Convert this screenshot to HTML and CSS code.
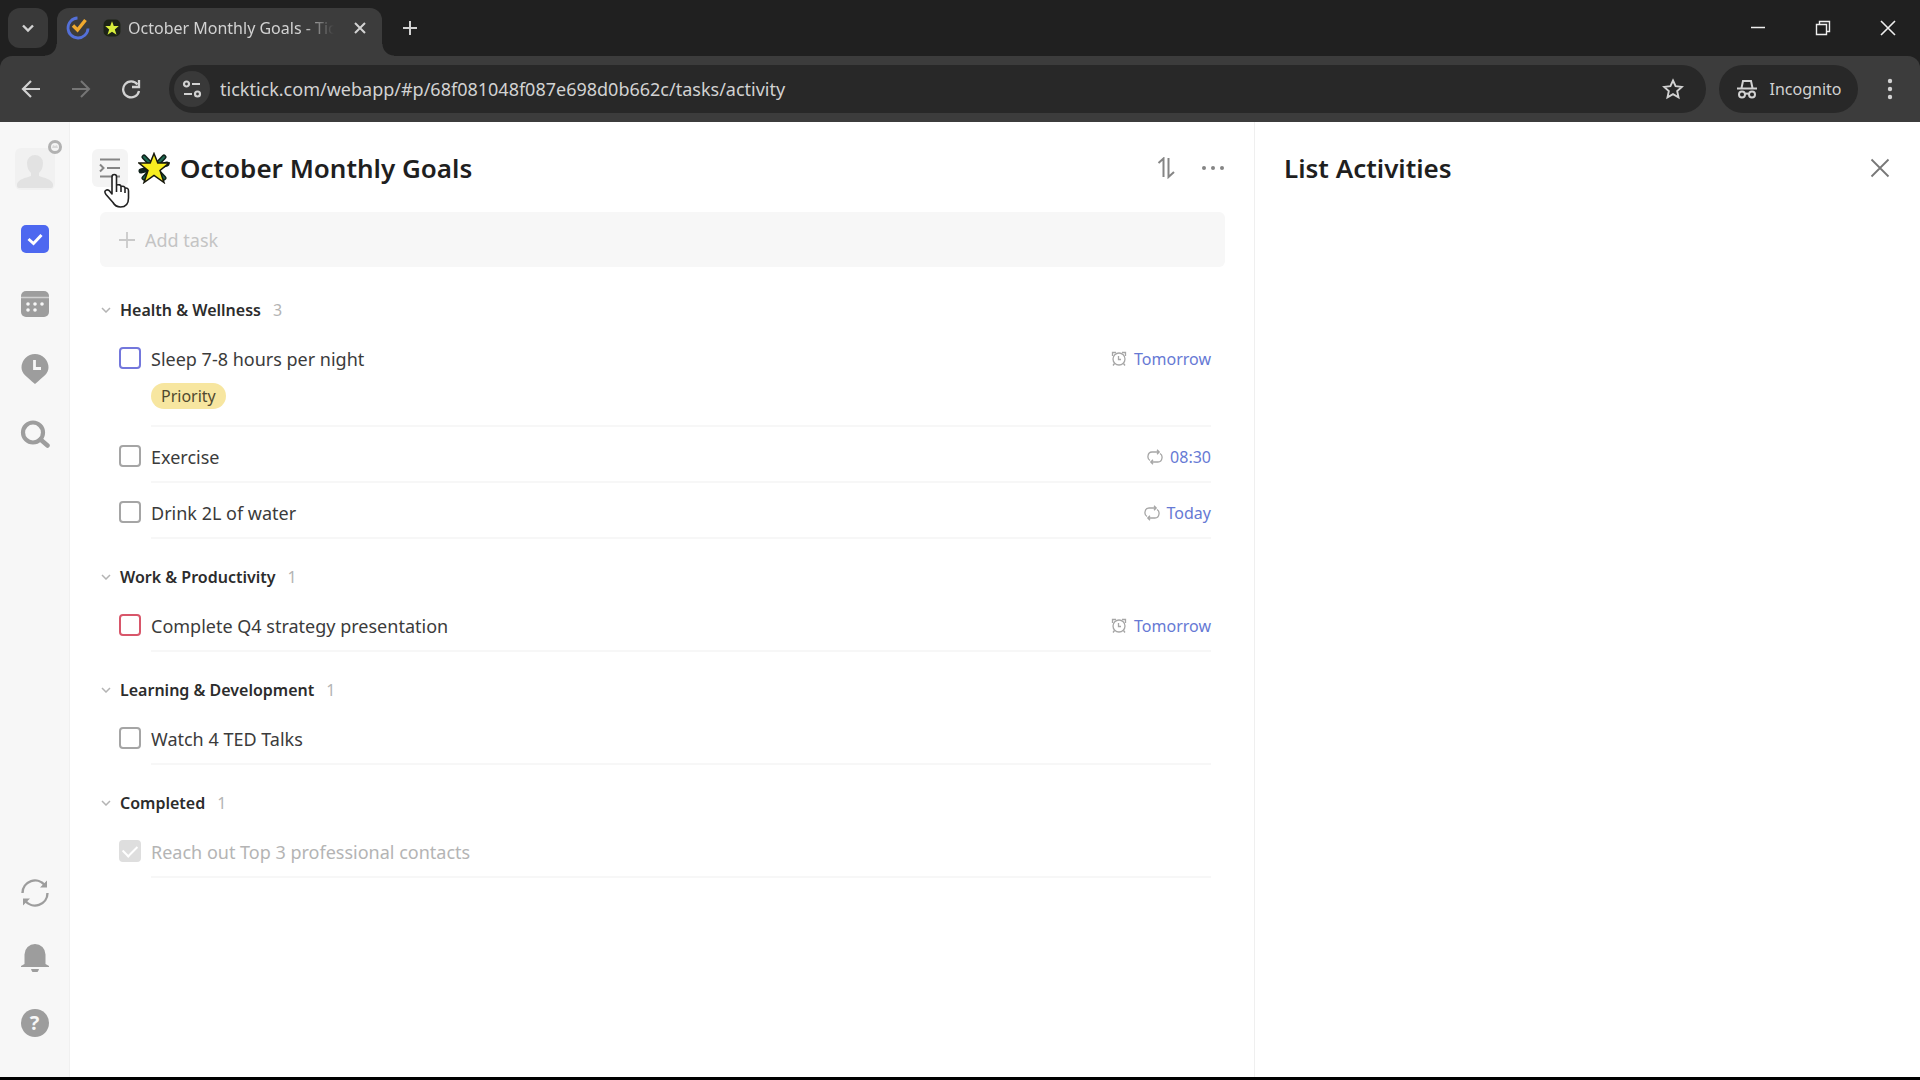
FILE: index.html
```html
<!DOCTYPE html>
<html lang="en">
<head>
<meta charset="utf-8">
<title>October Monthly Goals - TickTick</title>
<link rel="stylesheet" href="styles.css">
</head>
<body>
<header class="browser">
  <div class="tabstrip">
    <button class="tab-search" aria-label="Search tabs"><svg width="14" height="14" viewBox="0 0 14 14"><path d="M2 4.500l5 5 5-5" fill="none" stroke="currentColor" stroke-width="2.400"/></svg></button>
    <div class="tab">
      <svg width="24" height="24" viewBox="0 0 24 24" fill="none"><path d="M11.500 2A10 10 0 1 0 22 12.500" stroke="#5470d8" stroke-width="2.800"/><path d="M7 9.500l4.500 4.500L19.500 4" stroke="#f0a92e" stroke-width="3.400"/></svg>
      <svg class="tab-star" width="18" height="18" viewBox="0 0 32 32"><rect x="1" y="1" width="30" height="30" rx="9" fill="#1d2317"/><path d="M16 4l3.200 8.500H28l-7 6 3 9.500-8-5.500L8 28l3-9.500-7-6h8.800z" fill="#d8ef3c"/></svg>
      <span class="tab-title">October Monthly Goals - TickTick</span>
      <button class="tab-close" aria-label="Close tab"><svg width="14" height="14" viewBox="0 0 14 14"><path d="M2 2l10 10M12 2L2 12" stroke="currentColor" stroke-width="2"/></svg></button>
    </div>
    <button class="new-tab" aria-label="New tab"><svg width="16" height="16" viewBox="0 0 16 16"><path d="M8 1v14M1 8h14" stroke="currentColor" stroke-width="2"/></svg></button>
    <div class="window-buttons">
      <button aria-label="Minimize"><svg width="16" height="16" viewBox="0 0 16 16"><path d="M1 7.500h14" stroke="currentColor" stroke-width="1.500"/></svg></button>
      <button aria-label="Restore"><svg width="16" height="16" viewBox="0 0 16 16" fill="none" stroke="currentColor" stroke-width="1.400"><path d="M1.500 4.500h10v10h-10zM4.500 4.500v-3h10v10h-3"/></svg></button>
      <button aria-label="Close"><svg width="16" height="16" viewBox="0 0 16 16"><path d="M1 1l14 14M15 1L1 15" stroke="currentColor" stroke-width="1.600"/></svg></button>
    </div>
  </div>
  <div class="toolbar">
    <button aria-label="Back"><svg width="20" height="20" viewBox="0 0 20 20" fill="none" stroke="currentColor" stroke-width="2.200"><path d="M19 10H3M10 2L2 10l8 8"/></svg></button>
    <button class="dim" aria-label="Forward"><svg width="20" height="20" viewBox="0 0 20 20" fill="none" stroke="currentColor" stroke-width="2"><path d="M1 10h16M10 2l8 8-8 8"/></svg></button>
    <button aria-label="Reload"><svg width="20" height="20" viewBox="0 0 20 20" fill="none" stroke="currentColor" stroke-width="2.300"><path d="M16.500 5.500A8 8 0 1 0 18 12"/><path d="M18 1v7h-7"/></svg></button>
    <div class="address">
      <button class="site-info" aria-label="Site information"><svg width="20" height="18" viewBox="0 0 20 18" fill="none" stroke="currentColor" stroke-width="2.200"><circle cx="4.500" cy="4" r="2.500"/><path d="M10 4h8M2 14h8"/><circle cx="15.500" cy="14" r="2.500"/></svg></button>
      <input class="url" aria-label="Address" value="ticktick.com/webapp/#p/68f081048f087e698d0b662c/tasks/activity">
      <button aria-label="Bookmark"><svg width="22" height="22" viewBox="0 0 22 22" fill="none" stroke="currentColor" stroke-width="1.900"><path d="M11 2.500l2.600 5.700 6.200.7-4.600 4.200 1.300 6.200-5.500-3.200-5.500 3.200 1.300-6.200-4.600-4.200 6.200-.7z"/></svg></button>
    </div>
    <button class="incognito"><svg width="22" height="20" viewBox="0 0 22 20" fill="none" stroke="currentColor" stroke-width="2"><path d="M5.500 9L7 2h8l1.500 7M1 9.500h20"/><circle cx="6" cy="15.500" r="3"/><circle cx="16" cy="15.500" r="3"/><path d="M9 15q2-1 4 0"/></svg>Incognito</button>
    <button class="menu" aria-label="Browser menu"><svg width="6" height="22" viewBox="0 0 6 22" fill="currentColor"><circle cx="3" cy="3" r="2.200"/><circle cx="3" cy="11" r="2.200"/><circle cx="3" cy="19" r="2.200"/></svg></button>
  </div>
</header>

<div class="app">
  <nav class="rail" aria-label="Main">
    <button class="avatar" aria-label="Account">
      <svg width="40" height="42" viewBox="0 0 40 42" fill="#e2e2e2"><rect width="40" height="42" rx="6" fill="#f1f1f1"/><path d="M12 15a8 8 0 0 1 16 0c0 5-2 8-4 10v3c6 2 12 3 14 8v2q0 2-2 2H4q-2 0-2-2v-2c2-5 8-6 14-8v-3c-2-2-4-5-4-10z"/></svg>
      <svg class="badge" width="16" height="16" viewBox="0 0 16 16"><circle cx="8" cy="8" r="5.500" fill="#f4f4f4" stroke="#b2b2b2" stroke-width="3"/><path d="M5 9l1-3 2 1 2-1 1 3z" fill="#d8d8d8"/></svg>
    </button>
    <a class="rail-item" href="#tasks" aria-label="Tasks"><svg width="28" height="28" viewBox="0 0 28 28"><rect width="28" height="28" rx="5" fill="#4d68f0"/><path d="M7.500 14l5 4.500 8-8.500" fill="none" stroke="#fff" stroke-width="3"/></svg></a>
    <a class="rail-item" href="#calendar" aria-label="Calendar"><svg width="28" height="28" viewBox="0 0 28 28"><rect y="1" width="28" height="26" rx="5" fill="#9d9d9d"/><path d="M0 7.500h28" stroke="#d0d0d0" stroke-width="1.500"/><g fill="#f7f7f7"><circle cx="7" cy="14" r="1.800"/><circle cx="14" cy="14" r="1.800"/><circle cx="21" cy="14" r="1.800"/><circle cx="7" cy="20" r="1.800"/><circle cx="14" cy="20" r="1.800"/></g></svg></a>
    <a class="rail-item" href="#focus" aria-label="Focus"><svg width="28" height="30" viewBox="0 0 28 30"><path d="M14 0a13.500 13.500 0 0 1 13.500 13.500c0 6-5 9-13.500 16.500C5.500 22.500.5 19.500.5 13.500A13.500 13.500 0 0 1 14 0z" fill="#9d9d9d"/><path d="M13.500 6v8.500H20" fill="none" stroke="#f7f7f7" stroke-width="2.800"/></svg></a>
    <a class="rail-item" href="#search" aria-label="Search"><svg width="30" height="28" viewBox="0 0 30 28" fill="none" stroke="#9d9d9d"><circle cx="13" cy="12.500" r="10" stroke-width="4.200"/><path d="M20.500 19.500l7 6" stroke-width="4.500" stroke-linecap="round"/></svg></a>
    <div class="rail-space"></div>
    <button class="rail-item" aria-label="Sync"><svg width="28" height="28" viewBox="0 0 28 28" fill="none" stroke="#9d9d9d" stroke-width="2.400"><path d="M1.500 14A12.500 12.500 0 0 1 24 6.500M26.500 14A12.500 12.500 0 0 1 4 21.500"/><path d="M26 1.500V8.500H19zM2 26.500V19.500H9z" fill="#9d9d9d" stroke="none"/></svg></button>
    <button class="rail-item" aria-label="Notifications"><svg width="28" height="28" viewBox="0 0 28 28" fill="#9d9d9d"><path d="M3.500 20V10.500a10.500 10.500 0 0 1 21 0V20l3.500 2v1H0v-1zM10 25h8q-1 4-4 4t-4-4z"/></svg></button>
    <button class="rail-item" aria-label="Help"><span class="help">?</span></button>
  </nav>

  <main class="list">
    <div class="list-head">
      <button class="toggle" aria-label="Toggle sidebar"><svg width="22" height="20" viewBox="0 0 22 20" fill="none" stroke="#858585" stroke-width="2"><path d="M1 1.500h20M8 10h13M1 18.500h20M1 6.500L4.500 10 1 13.500"/></svg></button>
      <svg class="star" width="32" height="32" viewBox="0 0 32 32"><g stroke="#10231c" stroke-width="5" stroke-linecap="round"><path d="M6 5l20 21M26 5L6 26M3 19l26-7"/></g><g stroke="#1f6b52" stroke-width="2" stroke-linecap="round"><path d="M6 5l20 21M26 5L6 26"/></g><path d="M16 1.500l3.800 9.500H31l-9 7.500 4 12L16 23.500 6 30.500l4-12-9-7.500h11.200z" fill="#f7ee20" stroke="#17180c" stroke-width="1.500"/></svg>
      <h1>October Monthly Goals</h1>
      <button class="sort" aria-label="Sort"><svg width="18" height="22" viewBox="0 0 18 22" fill="none" stroke="#858585" stroke-width="2"><path d="M1.500 6L6.500 1.500V20M11.500 1v19L17 15"/></svg></button>
      <button aria-label="More"><svg width="24" height="6" viewBox="0 0 24 6" fill="#858585"><circle cx="3" cy="3" r="2"/><circle cx="12" cy="3" r="2"/><circle cx="21" cy="3" r="2"/></svg></button>
    </div>
    <div class="add">
      <svg width="16" height="16" viewBox="0 0 16 16"><path d="M8 0v16M0 8h16" stroke="#c9c9c9" stroke-width="1.800"/></svg>
      <input aria-label="Add task" placeholder="Add task">
    </div>

    <section>
      <h2><svg class="chev" viewBox="0 0 10 6"><path d="M1 1l4 4 4-4"/></svg>Health &amp; Wellness <span>3</span></h2>
      <div class="task tall">
        <input class="blue" type="checkbox" id="t1">
        <div class="body"><label for="t1">Sleep 7-8 hours per night</label>
          <span class="due"><svg width="16" height="16" viewBox="0 0 16 16"><circle cx="8" cy="8" r="6"/><path d="M1.500 5V1.500H5M11 1.500h3.500V5M3.500 12.500L2 14.500M12.500 12.500l1.500 2M7.500 5v3.500H10"/></svg>Tomorrow</span>
          <span class="tag">Priority</span></div>
      </div>
      <div class="task">
        <input type="checkbox" id="t2">
        <div class="body"><label for="t2">Exercise</label>
          <span class="due"><svg width="16" height="16" viewBox="0 0 16 16"><path d="M3 11.500Q.5 10 1 7q.5-4 4-4h7M10 .8L12.200 3 10 5.200M13 4.500q2.500 1.500 2 4.500-.5 4-4 4H4M6 10.800L3.800 13 6 15.200"/></svg>08:30</span></div>
      </div>
      <div class="task">
        <input type="checkbox" id="t3">
        <div class="body"><label for="t3">Drink 2L of water</label>
          <span class="due"><svg width="16" height="16" viewBox="0 0 16 16"><path d="M3 11.500Q.5 10 1 7q.5-4 4-4h7M10 .8L12.200 3 10 5.200M13 4.500q2.500 1.500 2 4.500-.5 4-4 4H4M6 10.800L3.800 13 6 15.200"/></svg>Today</span></div>
      </div>
    </section>
    <section>
      <h2><svg class="chev" viewBox="0 0 10 6"><path d="M1 1l4 4 4-4"/></svg>Work &amp; Productivity <span>1</span></h2>
      <div class="task">
        <input class="red" type="checkbox" id="t4">
        <div class="body"><label for="t4">Complete Q4 strategy presentation</label>
          <span class="due"><svg width="16" height="16" viewBox="0 0 16 16"><circle cx="8" cy="8" r="6"/><path d="M1.500 5V1.500H5M11 1.500h3.500V5M3.500 12.500L2 14.500M12.500 12.500l1.500 2M7.500 5v3.500H10"/></svg>Tomorrow</span></div>
      </div>
    </section>
    <section>
      <h2><svg class="chev" viewBox="0 0 10 6"><path d="M1 1l4 4 4-4"/></svg>Learning &amp; Development <span>1</span></h2>
      <div class="task">
        <input type="checkbox" id="t5">
        <div class="body"><label for="t5">Watch 4 TED Talks</label></div>
      </div>
    </section>
    <section>
      <h2><svg class="chev" viewBox="0 0 10 6"><path d="M1 1l4 4 4-4"/></svg>Completed <span>1</span></h2>
      <div class="task done">
        <input type="checkbox" id="t6" checked>
        <div class="body"><label for="t6">Reach out Top 3 professional contacts</label></div>
      </div>
    </section>
  </main>

  <aside class="panel">
    <h1>List Activities</h1>
    <button aria-label="Close panel"><svg width="20" height="20" viewBox="0 0 20 20"><path d="M1.500 1.500l17 17M18.500 1.500l-17 17" stroke="#777" stroke-width="1.800"/></svg></button>
  </aside>
</div>
<svg class="cursor" width="28" height="36" viewBox="0 0 28 36"><path d="M9 21V4q0-2.500 2.300-2.500T13.500 4v8q4-1 4.500 1.500 3.500-.8 4 1.500 3.500-.5 3.500 3v7q0 9-8 9-5 0-7.500-4.500L3 21.500q-2.500-3.500.5-4.500Q5.500 16.500 7 18.500zM13.500 12v7M18 13.500V19M22 15v5" fill="#fff" stroke="#222" stroke-width="1.600" stroke-linejoin="round"/></svg>
</body>
</html>
```
FILE: styles.css
```css
* { box-sizing: border-box; }
body {
  margin: 0;
  min-height: 100vh;
  display: flex;
  flex-direction: column;
  background: #fff;
  border-bottom: 3px solid #000;
  color: #1f1f1f;
  font-family: "Noto Sans", "Open Sans", sans-serif;
  font-size: 18px;
}
button, input { font: inherit; color: inherit; }
button {
  display: flex;
  align-items: center;
  justify-content: center;
  padding: 0;
  border: 0;
  background: none;
}
svg { display: block; flex: none; }
h1, h2 { margin: 0; }
h1 { font-size: 26px; font-weight: 600; line-height: 36px; }

/* Browser frame */
.browser { background: #202020; color: #d2d2d2; }
.tabstrip { display: flex; height: 56px; padding-left: 8px; }
.tab-search {
  width: 40px;
  height: 40px;
  margin-top: 8px;
  border-radius: 12px;
  background: #393939;
}
.tab {
  position: relative;
  display: flex;
  align-items: center;
  width: 325px;
  height: 48px;
  margin: 8px 0 0 9px;
  padding: 0 12px 8px 9px;
  border-radius: 12px 12px 0 0;
  background: #3c3c3c;
}
.tab::before, .tab::after {
  content: "";
  position: absolute;
  bottom: 0;
  width: 12px;
  height: 12px;
}
.tab::before { right: 100%; background: radial-gradient(circle at 0 0, transparent 11px, #3c3c3c 12px); }
.tab::after { left: 100%; background: radial-gradient(circle at 100% 0, transparent 11px, #3c3c3c 12px); }
.tab-star { margin: 0 7px 0 13px; }
.tab-title {
  flex: 1;
  min-width: 0;
  overflow: hidden;
  white-space: nowrap;
  font-size: 16px;
  line-height: 24px;
  mask-image: linear-gradient(to right, #000 85%, transparent);
}
.tab-close { width: 20px; height: 20px; margin-left: 16px; }
.new-tab { width: 32px; margin-left: 12px; }
.window-buttons { display: flex; margin-left: auto; }
.window-buttons button { width: 65px; color: #eee; }
.toolbar {
  display: flex;
  align-items: center;
  height: 66px;
  padding: 0 14px 0 6px;
  border-radius: 12px 12px 0 0;
  background: #3c3c3c;
}
.toolbar > button { width: 50px; height: 46px; }
.toolbar > .dim { color: #767676; }
.address {
  display: flex;
  flex: 1;
  align-items: center;
  height: 48px;
  margin-left: 13px;
  padding: 0 22px 0 5px;
  border-radius: 24px;
  background: #282828;
}
.site-info { width: 36px; height: 36px; border-radius: 50%; background: #393939; }
.url {
  flex: 1;
  min-width: 0;
  margin-left: 10px;
  padding: 0;
  border: 0;
  background: none;
}
.toolbar > .incognito {
  gap: 12px;
  width: 139px;
  height: 48px;
  margin: 0 16px 0 13px;
  border-radius: 24px;
  background: #282828;
  font-size: 16px;
}
.toolbar > .menu { width: 32px; }

/* Navigation rail */
.app { display: grid; flex: 1; grid-template-columns: 70px 16fr 9fr; }
.rail {
  display: flex;
  flex-direction: column;
  padding: 26px 0 22px;
  border-right: 1px solid #f0f0f0;
  background: #f7f7f7;
}
.avatar { position: relative; width: 69px; height: 42px; margin-bottom: 16px; }
.badge { position: absolute; top: -9px; right: 6px; }
.rail-item { display: flex; align-items: center; justify-content: center; width: 69px; height: 65px; }
.rail-space { flex: 1; }
.help {
  width: 28px;
  height: 28px;
  border-radius: 50%;
  background: #9d9d9d;
  color: #f7f7f7;
  font-size: 20px;
  font-weight: 700;
  line-height: 28px;
}

/* Task list */
.list { min-width: 0; padding: 22px 29px 0 30px; }
.list-head { display: flex; align-items: center; height: 48px; margin-bottom: 20px; }
.toggle { width: 36px; height: 38px; margin: 0 10px 0 -8px; border-radius: 6px; background: #f4f4f4; }
.star { margin-right: 10px; }
.sort { margin: 0 26px 0 auto; }
.add {
  display: flex;
  align-items: center;
  gap: 10px;
  height: 55px;
  margin-bottom: 5px;
  padding: 0 19px;
  border-radius: 6px;
  background: #f7f7f7;
}
.add input { flex: 1; padding: 0; border: 0; background: none; }
.add input::placeholder { color: #c4c4c4; opacity: 1; }
h2 {
  display: flex;
  align-items: center;
  height: 57px;
  padding-top: 18px;
  font-size: 16px;
  font-weight: 600;
  color: #2c2c2c;
}
h2 span { margin-left: 12px; font-weight: 400; color: #b4b4b4; }
.chev { width: 10px; height: 6px; margin: 0 9px 0 1px; fill: none; stroke: #b4b4b4; stroke-width: 1.5; }
.task { display: flex; gap: 10px; padding: 0 14px 0 19px; }
.task input {
  flex: none;
  appearance: none;
  width: 22px;
  height: 22px;
  margin: 18px 0 0;
  border: 2px solid #a5a5a5;
  border-radius: 4px;
  background: #fff;
}
.task .blue { border-color: #7377dc; }
.task .red { border-color: #d8566a; }
.task input:checked {
  display: grid;
  place-items: center;
  border-color: #dedede;
  background: #dedede;
}
.task input:checked::after {
  content: "";
  width: 12px;
  height: 7px;
  margin-bottom: 4px;
  border: solid #fff;
  border-width: 0 0 2px 2px;
  transform: rotate(-45deg);
}
.body {
  display: grid;
  flex: 1;
  grid-template-columns: 1fr auto;
  align-content: start;
  height: 56px;
  padding-top: 17px;
  border-bottom: 2px solid #f7f7f7;
  line-height: 26px;
  color: #3b3b3b;
}
.tall .body { height: 98px; row-gap: 11px; }
.due { display: flex; align-items: center; gap: 7px; font-size: 16px; color: #6679d4; }
.due svg { fill: none; stroke: #a6a6a6; stroke-width: 1.3; }
.tag {
  justify-self: start;
  padding: 0 10px;
  border-radius: 13px;
  background: #f7e6a0;
  font-size: 16px;
  color: #50492f;
}
.done .body { color: #b4b4b4; }

/* Activity panel */
.panel {
  display: flex;
  align-items: flex-start;
  justify-content: space-between;
  padding: 28px 30px 0 29px;
  border-left: 1px solid #efefef;
}
.panel button { height: 36px; }

.cursor { position: absolute; left: 103px; top: 173px; }
```
